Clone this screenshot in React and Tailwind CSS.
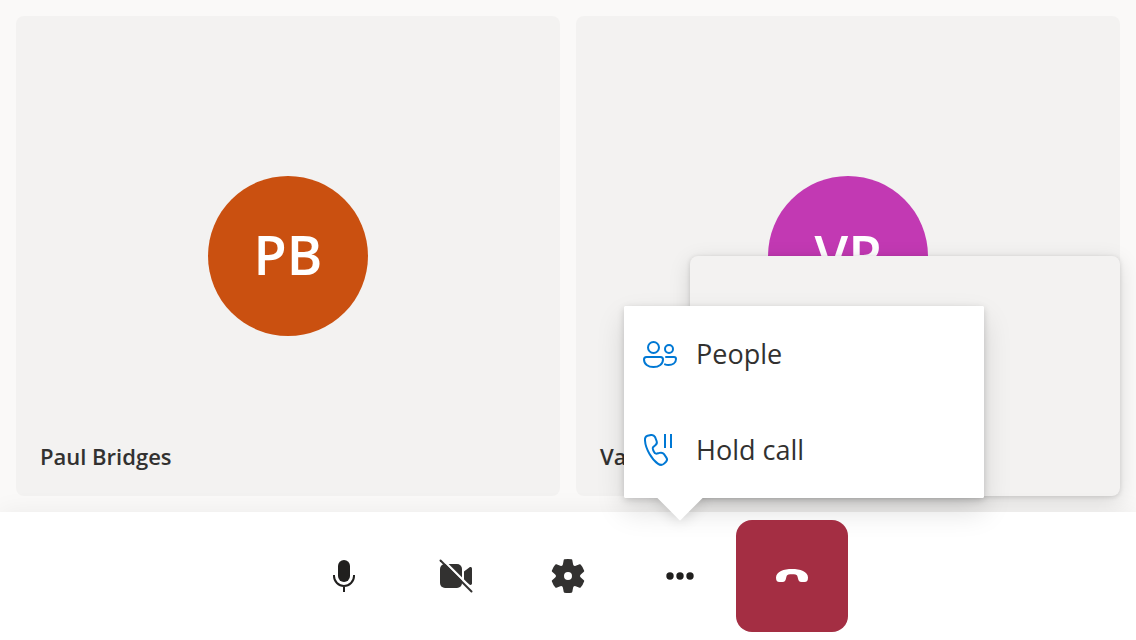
import React from "react";

function MicIcon() {
  return (
    <svg className="size-10" viewBox="0 0 40 40" fill="none" aria-hidden="true">
      <rect x="14" y="4" width="12" height="22" rx="6" fill="#201f1e" />
      <path d="M10 19v1a10 10 0 0 0 20 0v-1M20 30v6" stroke="#201f1e" strokeWidth="2" />
    </svg>
  );
}

function CameraOffIcon() {
  return (
    <svg className="size-10" viewBox="0 0 40 40" fill="none" aria-hidden="true">
      <rect x="4" y="8" width="22" height="24" rx="5" fill="#323130" />
      <path d="M28 15.5l5.6-4.2c1-.7 2.4 0 2.4 1.2v15c0 1.2-1.4 1.900-2.400 1.200L28 24.500z" fill="#323130" />
      <path d="M6.500 3.500l31 31" stroke="#fff" strokeWidth="2.400" />
      <path d="M4.500 4.500l31 31" stroke="#323130" strokeWidth="2" strokeLinecap="round" />
    </svg>
  );
}

function SettingsIcon() {
  return (
    <svg className="size-10" viewBox="0 0 20 20" aria-hidden="true">
      <path
        fill="#323130"
        fillRule="evenodd"
        d="M1.911 7.383a8.491 8.491 0 0 1 1.78-3.08.5.5 0 0 1 .54-.135l1.918.686a1 1 0 0 0 1.32-.762l.366-2.006a.5.5 0 0 1 .388-.4 8.532 8.532 0 0 1 3.554 0 .5.5 0 0 1 .388.4l.366 2.006a1 1 0 0 0 1.32.762l1.918-.686a.5.5 0 0 1 .54.136 8.491 8.491 0 0 1 1.78 3.079.5.5 0 0 1-.153.535l-1.555 1.32a1 1 0 0 0 0 1.524l1.555 1.32a.5.5 0 0 1 .152.535 8.491 8.491 0 0 1-1.78 3.08.5.5 0 0 1-.54.135l-1.917-.686a1 1 0 0 0-1.32.762l-.367 2.007a.5.5 0 0 1-.388.399 8.53 8.53 0 0 1-3.554 0 .5.5 0 0 1-.388-.4l-.366-2.006a1 1 0 0 0-1.32-.762l-1.918.686a.5.5 0 0 1-.54-.136 8.491 8.491 0 0 1-1.78-3.079.5.5 0 0 1 .153-.535l1.555-1.32a1 1 0 0 0 0-1.524l-1.555-1.32a.5.5 0 0 1-.152-.535zM10 12a2 2 0 1 0 0-4 2 2 0 0 0 0 4z"
      />
    </svg>
  );
}

function MoreIcon() {
  return (
    <svg className="size-10" viewBox="0 0 40 40" fill="#201f1e" aria-hidden="true">
      <circle cx="10" cy="20" r="3.700" />
      <circle cx="20" cy="20" r="3.700" />
      <circle cx="30" cy="20" r="3.700" />
    </svg>
  );
}

function HangUpIcon() {
  return (
    <svg className="size-10" viewBox="0 0 40 40" fill="#fff" aria-hidden="true">
      <path d="M20 13C28 13 36 15.500 36 21.500C36 24.500 35 26 32.500 26L29.500 26C27 26 26.600 24.800 26 22.500C25.400 19.800 25 19 23.500 18.600C21.500 18 18.500 18 16.500 18.600C15 19 14.600 19.800 14 22.500C13.400 24.800 13 26 10.500 26L7.500 26C5 26 4 24.500 4 21.500C4 15.500 12 13 20 13Z" />
    </svg>
  );
}

function PeopleIcon() {
  return (
    <svg className="size-10" viewBox="0 0 40 40" fill="none" stroke="#0078d4" strokeWidth="2" strokeLinecap="round" aria-hidden="true">
      <circle cx="13.500" cy="13.500" r="5.500" />
      <circle cx="29" cy="15" r="4" />
      <path d="M6.500 23h14a2.500 2.500 0 0 1 2.500 2.500c0 4.500-4 7.500-9.500 7.500S4 30 4 25.500a2.500 2.500 0 0 1 2.500-2.500z" />
      <path d="M26 23h8a2 2 0 0 1 2 2c0 4-3.500 6-7.500 6-1.300 0-2.500-.2-3.500-.6" />
    </svg>
  );
}

function HoldCallIcon() {
  return (
    <svg className="size-10" viewBox="0 0 40 40" fill="none" stroke="#0078d4" strokeWidth="2" aria-hidden="true">
      <path d="M7.500 5.800L11 5C13 4.600 14.200 5.400 15 7L16.600 11C17.200 12.600 16.800 14 15.600 15L13 17.200C12.200 18 13.400 21.600 15 23.200C16 24.300 17 23.600 19.500 22.900C21.500 22.400 23 22.800 24 24.200L26.400 27.600C27.400 29 27.200 30.500 26 31.800L24.400 33.400C22.600 35.200 20 35.200 17.800 33.600C12 29.400 5.500 19 5 10.500C4.800 8 5.500 6.300 7.500 5.800Z" />
      <path d="M25 4v14M31 4v14" />
    </svg>
  );
}

function Participant({ name, initials, color }) {
  return (
    <section className="relative flex flex-1 items-center justify-center rounded-lg bg-[#f3f2f1]">
      <div className={`flex size-40 items-center justify-center rounded-full pb-1 text-[54px] font-semibold text-white ${color}`}>
        {initials}
      </div>
      <p className="absolute bottom-6 left-6 text-[22px] leading-8 font-semibold text-[#323130]">{name}</p>
    </section>
  );
}

function ControlButton({ label, children, className = "", ...rest }) {
  return (
    <button type="button" aria-label={label} className={`flex size-28 items-center justify-center rounded-2xl ${className}`} {...rest}>
      {children}
    </button>
  );
}

function MenuItem({ icon, children }) {
  return (
    <button type="button" role="menuitem" className="flex h-24 w-full items-center gap-4 px-4 text-left text-[27px] text-[#323130]">
      {icon}
      {children}
    </button>
  );
}

function MoreMenu() {
  return (
    <div
      role="menu"
      className="absolute bottom-full left-0 z-20 mb-[22px] w-90 rounded-xs bg-white shadow-[0_13px_29px_rgba(0,0,0,0.13),0_2px_7px_rgba(0,0,0,0.16)]"
    >
      <div className="absolute -bottom-4 left-10 size-8 rotate-45 bg-white shadow-[0_0_15px_rgba(0,0,0,0.18)]" />
      <div className="relative rounded-xs bg-white">
        <MenuItem icon={<PeopleIcon />}>People</MenuItem>
        <MenuItem icon={<HoldCallIcon />}>Hold call</MenuItem>
      </div>
    </div>
  );
}

export default function App() {
  return (
    <div className="flex h-screen min-h-100 flex-col bg-[#faf9f8] font-['Segoe_UI','Open_Sans','Noto_Sans',sans-serif]">
      <main className="relative flex flex-1 gap-4 p-4">
        <Participant name="Paul Bridges" initials="PB" color="bg-[#ca5010]" />
        <Participant name="Vasily P." initials="VP" color="bg-[#c239b3]" />
        <div
          aria-label="Your video"
          className="absolute right-4 bottom-4 h-60 w-[430px] rounded-lg bg-[#f3f2f1] shadow-[0_6px_22px_rgba(0,0,0,0.13),0_1px_5px_rgba(0,0,0,0.14)]"
        />
      </main>
      <footer className="relative flex justify-center bg-white py-2 shadow-[0_0_24px_rgba(0,0,0,0.06)]">
        <ControlButton label="Mute">
          <MicIcon />
        </ControlButton>
        <ControlButton label="Turn camera on">
          <CameraOffIcon />
        </ControlButton>
        <ControlButton label="Settings">
          <SettingsIcon />
        </ControlButton>
        <div className="relative">
          <ControlButton label="More" aria-haspopup="menu" aria-expanded="true">
            <MoreIcon />
          </ControlButton>
          <MoreMenu />
        </div>
        <ControlButton label="Leave call" className="relative z-30 bg-[#a42e43]">
          <HangUpIcon />
        </ControlButton>
      </footer>
    </div>
  );
}
